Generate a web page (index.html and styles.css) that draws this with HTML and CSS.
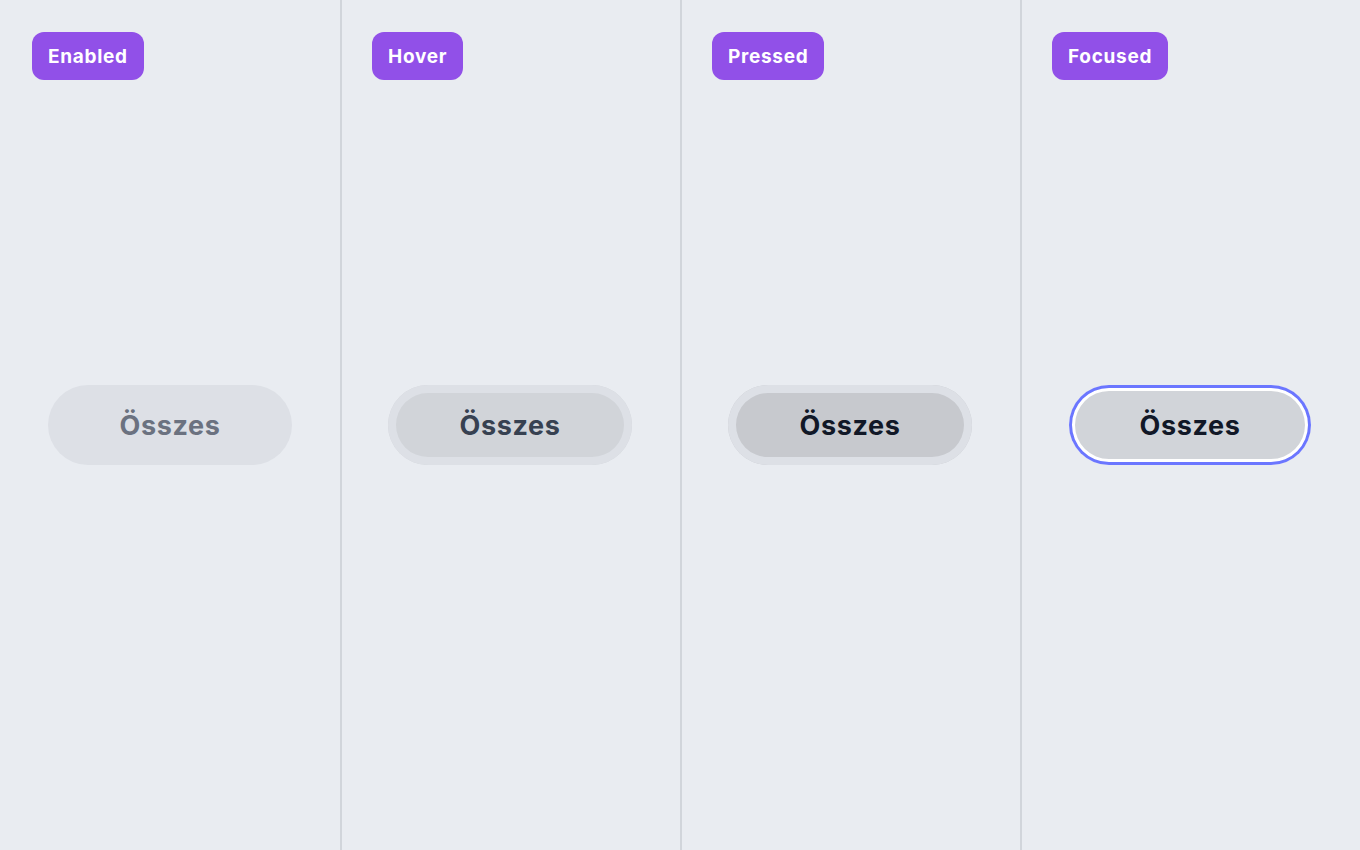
FILE: index.html
```html
<!DOCTYPE html>
<html>
<head>
<meta charset="utf-8">
<link rel="stylesheet" href="styles.css">
</head>
<body>
<div class="grid">
  <div class="col">
    <span class="badge">Enabled</span>
    <button class="btn enabled">Összes</button>
  </div>
  <div class="col">
    <span class="badge">Hover</span>
    <button class="btn hover">Összes</button>
  </div>
  <div class="col">
    <span class="badge">Pressed</span>
    <button class="btn pressed">Összes</button>
  </div>
  <div class="col">
    <span class="badge">Focused</span>
    <button class="btn focused">Összes</button>
  </div>
</div>
</body>
</html>
```
FILE: styles.css
```css
html, body { margin: 0; padding: 0; }
body {
  background: #e9ecf1;
  font-family: Inter, "Noto Sans", sans-serif;
  width: 1360px;
  height: 850px;
  overflow: hidden;
}
.grid {
  display: grid;
  grid-template-columns: repeat(4, 1fr);
  height: 850px;
}
.col {
  position: relative;
  display: flex;
  align-items: center;
  justify-content: center;
  border-left: 2px solid #d1d5db;
}
.col:first-child { border-left: none; }
.badge {
  position: absolute;
  top: 32px;
  left: 32px;
  height: 48px;
  padding: 1px 16px 0;
  box-sizing: border-box;
  display: flex;
  align-items: center;
  background: #9150e8;
  color: #fff;
  font-weight: 700;
  font-size: 19px;
  letter-spacing: 0.7px;
  border-radius: 12px;
}
.col:not(:first-child) .badge { left: 30px; }
.btn {
  font-family: Inter, "Noto Sans", sans-serif;
  font-size: 27px;
  font-weight: 700;
  letter-spacing: 0.6px;
  border: none;
  width: 244px;
  height: 80px;
  border-radius: 40px;
  background: #dde0e6;
  color: #6b7280;
  padding: 0;
}
.col:not(:first-child) .btn { margin-right: 2px; }
.btn.hover {
  background: #d1d4d9;
  color: #374151;
  box-shadow: inset 0 0 0 8px #dde0e6;
}
.btn.pressed {
  background: #c7c9ce;
  color: #111827;
  box-shadow: inset 0 0 0 8px #dde0e6;
}
.btn.focused {
  background: #d1d4d9;
  color: #111827;
  width: 242px;
  box-shadow: inset 0 0 0 3px #6b76ff, inset 0 0 0 6px #ffffff;
}
```
